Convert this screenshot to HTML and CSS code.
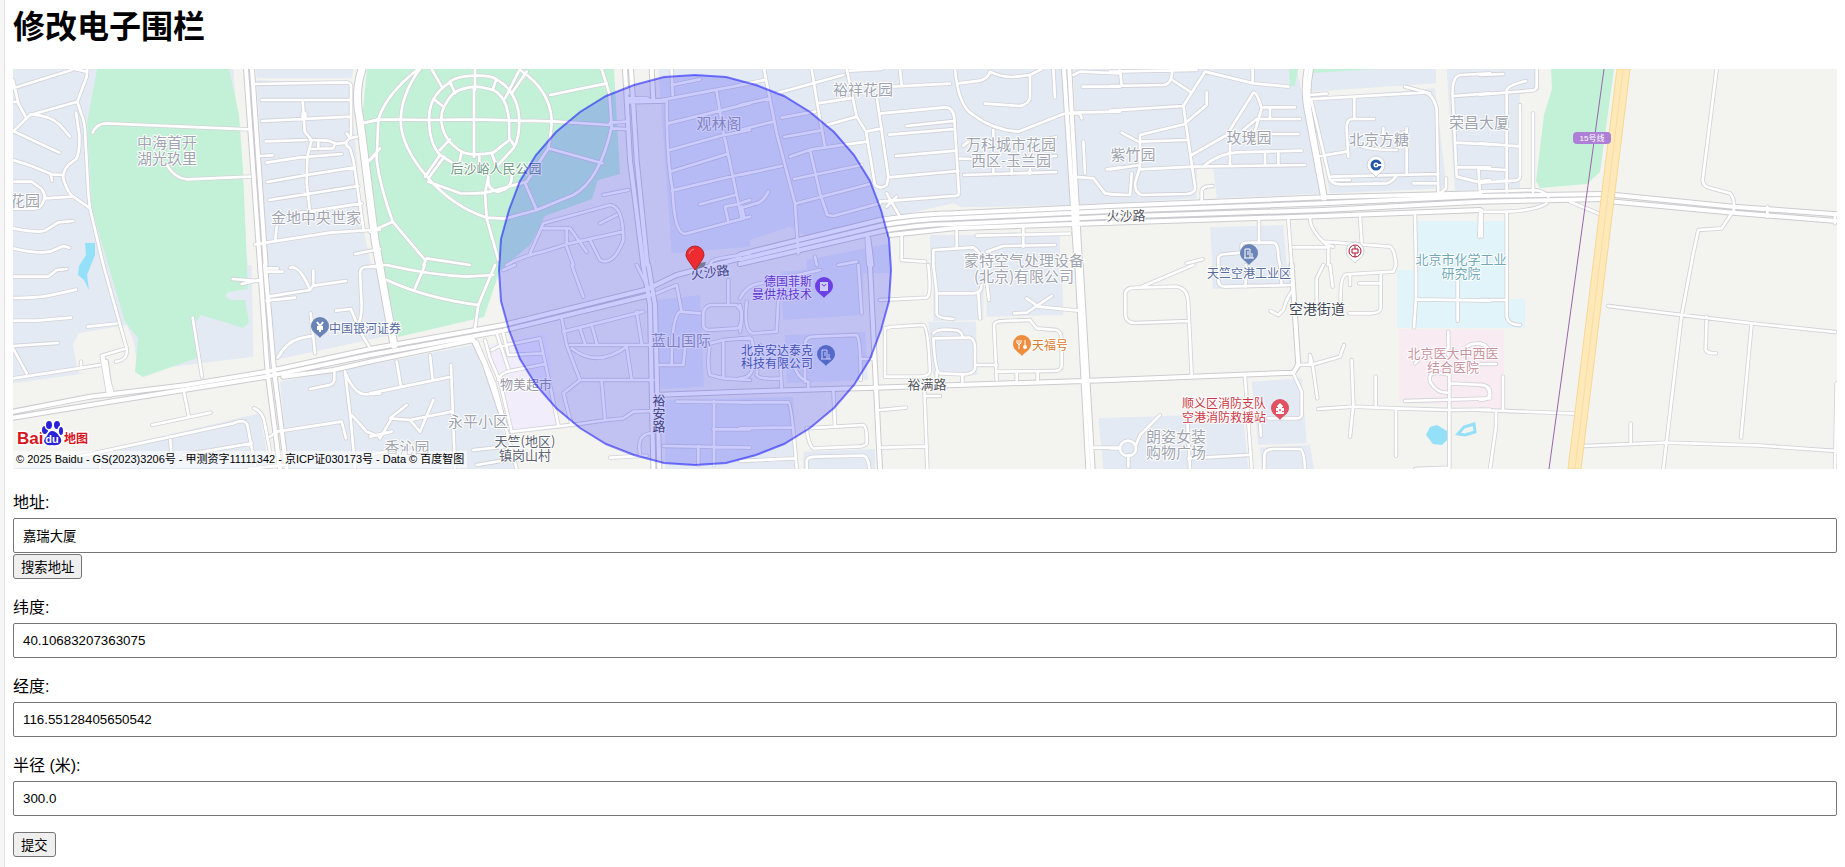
FILE: index.html
```html
<!DOCTYPE html>
<html lang="zh-CN">
<head>
<meta charset="utf-8">
<title>修改电子围栏</title>
<link rel="stylesheet" href="styles.css">
</head>
<body>
<div class="edge"></div>
<main class="content">
<h1 class="title">修改电子围栏</h1>
<div class="map">
<svg class="map-canvas" viewBox="13 69 1824 400" preserveAspectRatio="xMinYMid slice" role="img" aria-label="地图">
<defs>
<g id="minor">
<path transform="translate(0 60) scale(.33333)" d="M39,85L215,30M222,27L260,35M262,27L260,50 232,125 245,165Q255,185 256,230L265,400 270,445 310,615M232,125L90,165 39,215M39,60L55,130 78,172M39,126H52M90,163Q150,165 180,195L210,230M39,213L178,278M228,158L238,225Q240,280 228,297L205,315Q180,345 195,370Q205,400 220,410L270,445M39,300L95,318 155,343 188,345M152,343L156,362M39,365H95L125,387Q143,410 125,435 115,448 90,446H39M135,415L220,410M39,505Q120,520 135,512L175,487 220,483M39,565Q110,582 150,575L190,558 208,563M278,218Q290,190 318,190L745,208M500,315Q525,355 560,358L750,350M762,72L1040,67Q1053,69 1053,80V225M785,120H1052M787,183L1052,170M797,244L920,240M908,120L914,215 935,240 922,290 920,370 930,455M908,160H916V177H908ZM930,240L985,242 1005,250 1000,265 930,267M955,242V267M1005,252L1040,248M1040,220L1050,235 1070,230M1050,235Q1025,250 1050,265L1060,300 1090,505M778,288L818,286M800,308L900,292 1025,282M802,366L920,345 1065,322M808,420L1075,378M890,460L1085,430M830,500L826,540M765,553L990,518 1140,508M1065,582L1140,567M1085,190L1140,178M1100,310L1140,265"/>
<path transform="translate(0 265) scale(.33333)" d="M39,35H145L170,15 200,12M39,99Q110,99 150,91L228,74M39,167H110L213,158M263,185L350,176M39,243L173,234M39,250L80,325M39,340L230,311 300,300M243,290V310M310,0L380,250Q385,285 348,290M380,250L305,272 325,390M310,275L338,388M578,158L606,335M698,42L775,48M725,57L775,45M550,372L566,452M457,480L632,443M210,580L700,475Q735,460 742,480L765,600M510,515L517,600M550,570L755,535M300,590V612M762,430Q790,440 795,480L810,560M805,95L930,75Q900,0 870,8M940,17V60L930,75M940,62L1038,48M800,107L885,98M800,10L833,10M800,20L848,20M1140,6H1100Q1080,6 1080,25L1085,120Q1085,160 1075,175M1008,137L1053,132 1080,200 1108,245M932,145L940,215 945,265M833,278Q860,230 900,220L940,212M1003,320V345Q1000,360 980,362L930,372M1035,320Q1060,385 1095,388L1140,385M1035,320L1053,470 1065,612M1055,450L1100,500 1140,515M810,515L830,500 1025,470 1038,520M745,612L850,600"/>
<path transform="translate(370 60) scale(.33333)" d="M0,185L25,178 180,180 310,178 450,182 550,184 720,195M145,27Q50,100 25,178L20,300Q30,380 68,485L165,600M150,27Q95,100 92,180 92,260 175,355 250,440 350,473L405,476 500,450 610,405Q690,360 725,200L718,100 695,27M315,27V90M312,80V290M450,30Q540,90 545,180 545,210 535,265L470,365 360,395Q330,402 270,400L175,365M315,47Q250,50 238,68 175,110 177,180 178,250 210,285 L265,320M315,47Q360,45 378,57 445,95 448,180 448,240 430,265L380,320M315,80Q270,85 250,100 212,140 214,180 217,240 275,275 310,290 370,278L418,240 417,180Q410,110 370,90 330,80 315,80M185,27L218,85M240,65L255,100M450,27L405,115M470,35L425,100M378,60L368,90M195,120L220,140M210,270L240,238M418,235L432,255M275,275L265,320M365,280L380,320M328,290V320M223,290L175,355M210,285L165,350M355,350Q350,390 385,395 430,385 425,340M355,350L345,400 350,475 385,600M540,105L710,70M535,265L697,310M465,370L500,450M0,300L20,280M0,515L68,485M160,615L170,595 300,615M720,195V188L770,185M725,205L770,207M775,100Q760,30 765,27M905,27L908,105M770,115L830,115 850,125 1140,70M905,75L990,58M1040,95L1060,215 1115,475M890,125Q890,300 908,390 912,520 945,522L1140,470M895,190L1140,130M900,270L1050,228 1140,210M900,335L1070,283M905,392L1090,348 1140,338M990,433L1095,405M1065,440L1100,433 1140,420M1065,440L1075,485M700,405L775,390M480,580L520,490 720,435Q760,440 760,540 730,620 690,600L660,540M520,505H600L650,575M590,510L590,560 610,615M690,490L740,465M410,615Q450,590 520,575L600,550 760,515M1020,615Q1020,600 1050,595L1140,580"/>
<path transform="translate(370 265) scale(.33333)" d="M0,5L45,0M50,0Q180,30 290,35L370,30M165,0L135,70M50,45Q170,100 325,120L375,0M325,120L315,190M0,385L245,335M80,290L93,365M180,270L188,345M243,300L255,612M0,515L65,500M60,460L110,420M60,460L120,465 245,440M190,405L150,500 120,465M65,460L30,520M0,570L70,555M320,230L375,360 400,460 440,612M345,225L360,280 390,350 425,500 600,480M365,255L385,245 510,220 565,480M380,205L415,310 M400,205L415,270 515,265M385,345Q390,325 420,318L520,298M310,555L405,545M320,600L410,585 470,570M400,15L435,0M605,0L640,95M575,160L590,240 630,345 580,385 605,480 710,465 760,460 790,440 845,438M580,200L820,140M630,190L645,235M665,180L680,235M600,240H840M605,250Q680,310 770,245L785,345M800,140L815,235M630,345L850,345M695,350L705,465M800,0L830,60M860,85L920,60 935,140M990,145L930,140Q905,150 905,300M865,300H940L945,250M1000,140V180Q1000,195 1020,195L1100,190Q1115,190 1115,140L1100,120H1020Q1000,125 1000,150M1075,45V120M1020,235L1060,225 1140,218M1060,225V340M1020,235Q1010,300 1020,330L1060,340 1140,345M920,410L1140,412M1032,410V600M880,543L1140,548M1030,493H1140M985,543V600M720,578L830,572M810,565Q800,510 840,505"/>
<path transform="translate(740 60) scale(.33333)" d="M0,75L75,60M72,27L110,220 165,430 175,580M0,135L90,115M0,210L100,185M0,345L125,318M0,445L50,430Q70,425 85,395M5,440L12,470M110,100L310,45M215,27L235,150 255,260M125,173L225,155M232,130L330,115M133,231L240,212M260,195L350,170M320,27L350,170 378,215 405,375Q420,390 440,375L445,350 410,110M330,32L425,27M480,27L485,75M455,80L630,71M425,160L615,142Q640,142 643,175L657,400Q655,410 640,408L420,425M500,198L640,183M448,224L645,207M468,288L650,272M445,352L655,333M378,215L425,205M150,290L215,268 380,245M162,357L365,315M210,270L240,400 262,465 280,468 420,430M170,430L390,372M440,400L480,470M470,410L440,440M645,27Q655,140 700,165 760,210 835,215L900,190 970,162 1000,158 1140,155M655,70L720,62Q745,55 750,35 790,55 830,50L870,45 905,27M870,45V110Q870,130 840,138L735,131M940,27L945,112M760,210V240M670,257L685,245M672,345L948,336M660,296L700,297M760,320V342M815,320V342M870,320V342M925,290L948,288M930,235L948,232M1000,45L1020,35 1140,40M1028,80H1140M1000,160H1020L1025,175M1030,245L1035,340M1000,350L1060,355 1095,400 1140,405M1100,328L1140,322M485,530V600L555,605M580,615V570L700,562Q725,580 725,600M710,527L990,521M850,500V560M650,510V560M740,575L790,558 945,555M380,535L385,615M225,590L230,615M295,615L350,605"/>
<path transform="translate(740 265) scale(.33333)" d="M0,100Q20,60 60,55L240,15M20,110Q10,200 40,205L110,200 115,100M0,200Q10,150 0,120M355,0L365,145M565,0Q575,90 560,98L420,105M435,200Q430,185 470,185L550,180Q565,185 570,320 565,335 540,335L435,335M435,190V335M580,0Q590,80 590,85L590,145Q590,160 640,162M590,85H700Q725,85 725,60M715,85L720,160M740,50L747,105M860,100L895,125 1015,137M935,93L860,143 822,145M580,205Q590,190 640,195 665,195 668,215M580,220L690,218Q705,222 705,250V310Q700,328 670,328L600,325Q585,320 580,220M590,320V340M667,330V350M712,300H770M770,345L762,180Q765,168 790,168L870,165 890,190 950,195Q965,200 965,230V300Q965,318 940,318L775,320M830,320V345M893,320V345M553,370L562,612M553,393H600M420,435L498,428M425,548L562,544M280,375L285,480M200,490L370,480Q382,485 380,535 375,545 350,545L220,550Q205,540 200,490M200,612V585Q205,575 230,575L370,572Q385,575 388,612M195,350V240Q195,215 220,215L350,210Q362,220 362,345M360,282H400M0,220L35,222Q40,235 40,300 35,340 0,340M120,270L125,370M60,240L50,330Q60,345 120,340M160,290Q170,340 205,350V370M0,412L145,412Q155,415 170,612M0,490L160,487M0,588L165,580M1060,548H1140"/>
<path transform="translate(1110 60) scale(.33333)" d="M30,30L35,75M0,35L260,30M0,78L160,75Q185,75 187,30M187,60L240,95M285,35L220,137 255,380Q258,400 230,402L95,405Q75,400 75,370L90,320 90,225 225,192M285,35L430,70 535,80M428,27V68M0,152L220,138M225,190L290,135V97M35,218L85,245 230,240M0,328L90,315M90,328L250,320 585,315M0,403L60,405 65,340M245,285L350,225 430,98Q440,95 455,145L430,230M555,142H460M570,177H440L400,210M480,145V175M565,222H450M285,315Q330,280 380,277L575,272M360,250V315M465,275V315M505,275V315M275,425V395Q275,378 308,378M600,105L650,101M590,118L940,98Q965,95 980,145L985,400M885,80L960,100M603,118L660,360Q670,373 690,373L830,370Q850,365 860,345M733,115V177M792,177H725Q708,180 710,210L715,290M620,290L710,275M665,350L985,342M665,360H720M890,205V345M820,205V235M845,230L890,215M740,250Q760,270 860,270M910,370H980M1008,355V385L990,400M1140,40L1050,45Q1025,50 1028,110L1040,350 1100,365 1140,360M1030,108L1140,100M1035,248L1140,253M1040,322L1140,322M1105,325L1110,395M447,480V550M395,575V555Q395,548 420,548H490Q505,550 505,590L510,615M325,615V595Q325,582 350,582L395,578M230,610L278,598M535,480L545,615M600,475Q600,510 650,555L670,560M550,562H650M640,545L840,560Q855,570 858,615M750,470L755,545M655,560V615M915,465L918,615M1110,460L1108,530"/>
<path transform="translate(1110 265) scale(.33333)" d="M250,0L95,65M45,90Q45,68 75,68L200,65Q235,70 235,120L245,330M235,168L75,174Q48,174 46,150V90M325,0V45Q325,65 345,65L545,60M407,0V65M510,0L515,60M545,80Q530,100 520,135L505,150 482,138M560,300L610,298 690,275 702,240M600,300V270L608,300 622,400M725,285L730,420 720,515M625,432L730,425 860,430 1018,435 1140,434M797,335V420M858,430V572M692,110Q690,30 710,28L850,20 858,0M720,60V30M747,55H812M812,30V130Q810,145 780,145H718M620,110V40L640,0M660,0L668,65M918,0V100L912,187M918,103L1140,107M1043,35V168M1015,200V270M1018,320V612M1018,330Q950,310 960,350 980,385 1010,383M1018,355L1120,360Q1140,365 1140,400L885,408M915,295L930,280M1070,245Q1090,230 1125,240M405,335L425,612M550,325L575,380V450Q575,460 555,460H475M450,475L453,512M0,550H30M55,605V570M78,540L90,510 150,450M30,550A23,22 0 1 0 78,550A23,22 0 1 0 30,550M235,580L415,570M232,470L240,612M463,612V570Q465,552 490,552H570Q582,555 585,612M915,612L1018,608"/>
<path transform="translate(1480 60) scale(.33333)" d="M0,45L70,42M80,395V90Q85,75 138,63M170,27V80Q168,92 150,92L0,104M120,135V350Q118,362 100,362L0,368M159,160V395M0,250L120,259M0,325L80,330M80,455V770Q85,795 120,795M0,720H80M710,27L668,360Q668,378 690,384L750,400Q765,415 762,450L725,505 655,510 640,580 605,765 550,1227M862,440V470M1065,460V490M385,738L605,765 815,790 1065,816M680,770L677,870Q680,880 708,880M815,790L783,1133M312,1158L555,1148 830,1156 1070,1173M1065,1227L1070,970M452,1090V1150M0,1050L290,1061M69,950V1050M48,1055V1100L30,1227M0,850L20,860M0,912H48M0,975Q35,975 30,1005 20,1020 0,1020M270,425L362,463M0,395L160,390Q190,390 205,410M0,455Q150,460 200,430M5,450V530"/>
</g>
<g id="major">
<path transform="translate(0 60) scale(.33333)" d="M738,27L780,615M756,27L797,615"/>
<path transform="translate(0 265) scale(.33333)" d="M780,0L803,325 840,612M795,0L823,325 860,612M39,440L270,395 560,360 800,320 1110,252M39,458L330,410 800,335 1110,270M850,335L1000,315 1110,290M318,290L330,390"/>
<path transform="translate(370 60) scale(.33333)" d="M765,27L780,300 820,615M783,27L800,300 832,615M845,27L850,120M770,125L885,122"/>
<path transform="translate(370 265) scale(.33333)" d="M820,0L840,120 850,612M835,0L855,120 868,612M0,252L400,180 830,73 920,30 1110,-20M0,270L400,197 840,90M0,290L310,225M310,225L345,300 405,480M850,390L1110,380"/>
<path transform="translate(740 60) scale(.33333)" d="M0,583L420,480Q560,460 640,460L1110,438M0,598L430,495Q560,475 640,475L1110,453M0,612L440,510Q560,492 640,492L1110,470M450,525L640,505 1110,488M972,27L1010,615M988,27L1020,615M385,535L395,615"/>
<path transform="translate(740 265) scale(.33333)" d="M390,0L420,612M1012,0L1045,612M1022,0L1058,612M0,380L400,368 1030,348 1110,345"/>
<path transform="translate(1110 60) scale(.33333)" d="M0,438L640,412 1110,400M0,453L640,430 1110,408M0,470L640,450 1110,425M0,488L640,468 1110,450M590,27Q578,90 590,150L640,415M603,27Q590,90 598,150L645,415"/>
<path transform="translate(1110 265) scale(.33333)" d="M0,345L550,323 565,300 545,0"/>
<path transform="translate(1480 60) scale(.33333)" d="M0,408L370,402M0,425L370,417M405,405L760,440 1070,463M405,425L760,458 1070,483"/>
</g>
<path id="avenue" d="M362,69Q354,94 360,120L375,240 394,345"/>
<path id="drop" d="M0,10C-3,6 -9,4 -9,-2A9,9 0 0 1 9,-2C9,4 3,6 0,10Z"/>
</defs>

<rect class="land" x="13" y="69" width="2400" height="400"/>

<g class="block">
<path transform="translate(0 60) scale(.33333)" d="M39,27H700L745,640H39ZM768,27H1060L1055,55H770ZM770,60L1050,75 1090,510 1120,640H805Z"/>
<path transform="translate(0 265) scale(.33333)" d="M39,0H755L760,275 480,310 235,328 39,355ZM805,0H1170L1220,200 825,285ZM840,350L1420,240 1475,380 1545,612H865ZM39,612L330,550 780,445 808,612Z"/>
<path transform="translate(370 60) scale(.33333)" d="M865,27H1140V560L905,580Z"/>
<path transform="translate(370 265) scale(.33333)" d="M860,105L990,90 1002,365 873,372ZM885,405L1140,400V612H885Z"/>
<path transform="translate(740 60) scale(.33333)" d="M0,27H968L995,435 665,442 640,430 200,530 150,500 0,550ZM1000,27H1140V425L1015,435ZM570,525H960V615H570ZM200,600L450,550V640H200Z"/>
<path transform="translate(740 265) scale(.33333)" d="M120,20L370,0V150L130,165ZM135,210L375,200 385,345 140,355ZM0,400L160,395 170,612H0ZM580,0H730V165L580,168ZM740,0H965L970,150 740,155ZM565,170H708L712,330H580ZM190,560L405,552V612H190ZM1075,460L1200,455V612H1090Z"/>
<path transform="translate(1110 60) scale(.33333)" d="M0,27H560L640,400 320,415 310,325H260V415L0,430ZM600,27H978V70L600,95ZM605,115L975,85 1010,385 660,400ZM1010,27H1280L1290,90 1230,95V385L1035,392ZM300,502L520,495 530,620H308Z"/>
<path transform="translate(1110 265) scale(.33333)" d="M305,0H550V65L308,72ZM0,460L230,450 400,455 415,612H0ZM425,350L575,340 590,535 445,540ZM450,548L600,540 612,612H455Z"/>
</g>
<path class="land" transform="translate(0 265) scale(.33333)" d="M235,205L380,180 400,225 418,335 235,325 218,240Z"/>
<g class="park">
<path d="M97,69H229L239,115 243,170 247,267 248,289 228,292 225,296 230,300 245,300 249,322 243,328 201,315 195,322 197,358 143,377 135,372 138,338 125,322 92,210 87,123Z"/>
<path d="M367,69H614L620,174 598,180 592,199 545,216 530,245 500,270 484,317 398,337 380,250 362,120Z"/>
<path d="M1289,69H1298L1295,86H1290ZM1313,69H1375L1313,73Z"/>
<path d="M1551,69H1614L1600,172 1587,184 1540,188 1536,181 1544,115 1552,89Z"/>
</g>
<path class="school" d="M1417,221H1506V299H1525V328H1397V270H1417Z"/>
<path class="hospital" d="M1399,329L1504,330V409L1399,402Z"/>
<path class="mall" d="M490,345L545,333 560,425 510,434Z"/>
<g class="water">
<path d="M85,243H95V255L87,275 89,290 84,280 78,275 79,266 86,255Z"/>
<path d="M1426,435L1430,427 1437,425 1447,431 1447,440 1442,445 1433,444Z"/>
<path class="pond" d="M1458,434L1464,427 1474,424 1475,432 1465,435Z"/>
</g>

<use href="#minor" class="road minor-case"/>
<use href="#major" class="road major-case"/>
<use href="#avenue" class="road avenue-case"/>
<use href="#minor" class="road minor-fill"/>
<use href="#major" class="road major-fill"/>
<use href="#avenue" class="road avenue-fill"/>
<path class="highway" d="M1617,69H1630L1581,469H1568Z"/>
<path class="highway-line" d="M1623,69L1575,469"/>
<path class="metro" d="M1604,69L1549,469"/>
<rect class="metro-tag" x="1573" y="132" width="38" height="12" rx="4"/>
<text class="t8" x="1592" y="141">15号线</text>

<g class="label gray t15">
<text x="167" y="148">中海首开</text><text x="167" y="164">湖光玖里</text>
<text x="25" y="206">花园</text><text x="316" y="223">金地中央世家</text>
<text x="719" y="129">观林阁</text><text x="863" y="95">裕祥花园</text>
<text x="1011" y="150">万科城市花园</text><text x="1011" y="166">西区-玉兰园</text>
<text x="1133" y="160">紫竹园</text><text x="1249" y="143">玫瑰园</text>
<text x="1379" y="145">北京方糖</text><text x="1479" y="128">荣昌大厦</text>
<text x="1024" y="266">蒙特空气处理设备</text><text x="1024" y="282">(北京)有限公司</text>
<text x="681" y="346">蓝山国际</text><text x="478" y="427">永平小区</text>
<text x="407" y="453">香沁园</text><text x="1176" y="442">朗姿女装</text><text x="1176" y="458">购物广场</text>
</g>
<g class="label t13">
<text class="green-text" x="496" y="173">后沙峪人民公园</text>
<text class="market" x="526" y="389">物美超市</text>
<text class="street" x="1126" y="220">火沙路</text><text class="street" x="927" y="389">裕满路</text>
<text class="street" x="659" y="405">裕</text><text class="street" x="659" y="418">安</text><text class="street" x="659" y="431">路</text>
<text class="street" x="710" y="277" transform="rotate(-7 710 272)">火沙路</text>
<text class="teal" x="1461" y="264">北京市化学工业</text><text class="teal" x="1461" y="278">研究院</text>
<text class="rose" x="1453" y="358">北京医大中西医</text><text class="rose" x="1453" y="372">结合医院</text>
<text class="village" x="525" y="446">天竺(地区)</text><text class="village" x="525" y="460">镇岗山村</text>
</g>
<text class="label town t14" x="1317" y="314">空港街道</text>
<g class="label t12">
<text class="blue" x="365" y="333">中国银河证券</text><text class="blue" x="1249" y="278">天竺空港工业区</text>
<text class="violet" x="788" y="286">德国菲斯</text><text class="violet" x="782" y="299">曼供热技术</text>
<text class="blue" x="777" y="355">北京安达泰克</text><text class="blue" x="777" y="368">科技有限公司</text>
<text class="orange" x="1050" y="350">天福号</text>
<text class="red" x="1224" y="408">顺义区消防支队</text><text class="red" x="1224" y="422">空港消防救援站</text>
</g>

<g transform="translate(320 328)"><use href="#drop" class="pin-blue"/><path class="glyph bold" d="M-3,-6L0,-2 3,-6M0,-2V4M-3,-1H3M-3,1H3"/></g>
<g transform="translate(1249 255)"><use href="#drop" class="pin-blue"/><path class="glyph" d="M-4,3V-6H1V3M-2,-3H0M-2,-1H0M3,-2V3M-5,3H5"/></g>
<g transform="translate(826 356)"><use href="#drop" class="pin-blue"/><path class="glyph" d="M-4,3V-6H1V3M-2,-3H0M-2,-1H0M3,-2V3M-5,3H5"/></g>
<g transform="translate(824 288)"><use href="#drop" class="pin-violet"/><path class="glyph-fill" d="M-4,-6H4V3H-4Z"/><path class="bag" d="M-2,-4Q0,0 2,-4"/></g>
<g transform="translate(1022 346)"><use href="#drop" class="pin-orange"/><path class="glyph" d="M-3,-6V3M-5,-6V-3L-3,-1 -1,-3V-6M3,-6V-1"/><circle class="glyph-fill" cx="3" cy="1" r="2"/></g>
<g transform="translate(1280 410)"><use href="#drop" class="pin-red"/><path class="glyph-fill" d="M-2,-5L0,-7 2,-5 3,-4V-3H-3V-4ZM-2,-3H2V2H4V4H-4V2H-2ZM-4,-2H4V1H-4Z"/><circle class="dot-red" r="1"/></g>
<g transform="translate(1376 167)"><use href="#drop" class="pin-white"/><circle class="c-blue" cy="-2" r="4"/><path class="c-notch" d="M2,-2H6"/><circle class="dot-blue" cy="-2" r="1"/></g>
<g transform="translate(1355 253)"><use href="#drop" class="pin-white"/><circle class="bank" cy="-2" r="6"/><path class="bank" d="M-3,-4H3V0H-3ZM0,-7V-4M0,0V4"/></g>

<path class="fence" transform="translate(695 270)" d="M0,-195L31,-193 61,-185 89,-174 115,-158 139,-138 159,-115 175,-89 186,-60 194,-31 196,0 194,31 186,60 175,89 159,115 139,138 115,158 89,174 61,185 31,193 0,195 -31,193 -61,185 -89,174 -115,158 -139,138 -159,115 -175,89 -186,60 -194,31 -196,0 -194,-31 -186,-60 -175,-89 -159,-115 -139,-138 -115,-158 -89,-174 -61,-185 -31,-193Z"/>
<path class="shadow" d="M695,270L699,263 706,262 704,267Z"/>
<path class="marker" d="M695,270L688,260Q686,257 686,255A9,9 0 0 1 704,255Q704,257 702,260Z"/>
<path class="shine" d="M689,254Q690,250 694,249"/>

<g class="logo">
<text class="logo-latin" x="17" y="444">Bai</text><text class="logo-cjk" x="64" y="443">地图</text>
<g class="paw"><ellipse cx="45" cy="430" rx="3" ry="4"/><ellipse cx="49" cy="425" rx="3" ry="4"/><ellipse cx="57" cy="425" rx="3" ry="4"/><ellipse cx="61" cy="431" rx="2" ry="4"/><path d="M52,431Q56,431 59,436 62,439 61,442 59,446 52,445 45,446 44,441 44,438 47,436 49,431 52,431Z"/></g>
<text class="logo-du" x="52" y="443">du</text>
</g>
</svg>
<div class="copyright">© 2025 Baidu - GS(2023)3206号 - 甲测资字11111342 - 京ICP证030173号 - Data © 百度智图</div>
</div>
<form class="form">
<div class="field"><label for="address">地址:</label><input id="address" type="text" value="嘉瑞大厦"><button class="search" type="button">搜索地址</button></div>
<div class="field"><label for="lat">纬度:</label><input id="lat" type="text" value="40.10683207363075"></div>
<div class="field"><label for="lng">经度:</label><input id="lng" type="text" value="116.55128405650542"></div>
<div class="field"><label for="radius">半径 (米):</label><input id="radius" type="text" value="300.0"></div>
<button type="submit">提交</button>
</form>
</main>
</body>
</html>
```
FILE: styles.css
```css
* { box-sizing: border-box; }
body {
  margin: 0;
  display: flex;
  min-height: 100vh;
  background: #fff;
  color: #000;
  font-family: "Liberation Sans", "Noto Sans CJK SC", sans-serif;
}
.edge { flex: 0 0 5px; background: #f5f5f5; border-right: 1px solid #e4e4e4; }
.content { flex: 1; min-width: 0; padding: 6px 8px 8px; }
.title { margin: 0 0 20px; font-size: 32px; line-height: 43px; }
.map { position: relative; height: 400px; overflow: hidden; background: #f3f3ef; }
.map-canvas { display: block; width: 100%; height: 100%; }
.copyright {
  position: absolute;
  left: 0;
  bottom: 1px;
  padding: 0 3px;
  background: rgba(255, 255, 255, .5);
  font-size: 11px;
  line-height: 17px;
  white-space: nowrap;
}

.land { fill: #f3f3ef; }
.block { fill: #e4eaf3; }
.park { fill: #c3f1d7; }
.school { fill: #e0f4fa; }
.hospital { fill: #f8ebf1; }
.mall { fill: #f1edfa; }
.water { fill: #94e0f8; }
.pond { fill: #f3f3ef; stroke: #94e0f8; stroke-width: 3; }
.road { fill: none; stroke-linejoin: round; stroke-linecap: round; }
.minor-case { stroke: #d2d3d8; stroke-width: 13; }
.minor-fill { stroke: #fff; stroke-width: 8; }
.major-case { stroke: #ccccd0; stroke-width: 18; }
.major-fill { stroke: #fff; stroke-width: 12; }
.avenue-case { stroke: #ccccd0; stroke-width: 9; }
.avenue-fill { stroke: #fff; stroke-width: 7; }
.highway { fill: #ffe9b8; stroke: #f8d795; stroke-width: 1; }
.highway-line { stroke: #f8dca2; }
.metro { stroke: #9667a8; }
.metro-tag { fill: #ad7fd6; }
.t8 { font-size: 8px; fill: #fff; text-anchor: middle; }
.t12 { font-size: 12px; }
.t13 { font-size: 13px; }
.t14 { font-size: 14px; }
.t15 { font-size: 15px; }
.label {
  font-family: "Noto Sans CJK SC", sans-serif;
  text-anchor: middle;
  stroke: #fff;
  stroke-width: 2px;
  stroke-linejoin: round;
  paint-order: stroke;
}
.gray { fill: #a0a4b0; }
.green-text { fill: #719b86; }
.market { fill: #9896a8; }
.street { fill: #55565e; }
.teal { fill: #6fa9b8; }
.rose { fill: #c9939f; }
.village { fill: #5c6272; }
.town { fill: #3f4656; }
.blue { fill: #5469a0; }
.violet { fill: #7a43c4; }
.orange { fill: #dc7b2e; }
.red { fill: #c93645; }
.pin-blue { fill: #6b84b8; }
.pin-violet { fill: #8950de; }
.pin-orange { fill: #ee8d3e; }
.pin-red { fill: #e15362; }
.pin-white { fill: #fff; stroke: #d0d0da; }
.glyph { fill: none; stroke: #fff; stroke-width: 1; }
.bold { stroke-width: 2; }
.glyph-fill { fill: #fff; }
.bag { fill: none; stroke: #8950de; }
.dot-red { fill: #e15362; }
.c-blue { fill: none; stroke: #2458a5; stroke-width: 3; }
.c-notch { stroke: #fff; stroke-width: 2; }
.dot-blue { fill: #2458a5; }
.bank { fill: none; stroke: #a8102f; stroke-width: 1; }
.fence { fill: rgba(0, 0, 255, .2); stroke: rgba(0, 0, 255, .5); stroke-width: 2; }
.shadow { fill: #777798; }
.marker { fill: #ee2b30; stroke: #b3242a; stroke-width: 1; }
.shine { fill: none; stroke: #f98a8c; stroke-width: 1; }
.logo text, .paw { stroke: #fff; stroke-width: 3px; stroke-linejoin: round; paint-order: stroke; }
.logo-latin { font-size: 17px; font-weight: bold; fill: #d8151c; }
.logo-cjk { font-family: "Noto Sans CJK SC", sans-serif; font-size: 12px; font-weight: bold; fill: #d8151c; }
.paw { fill: #2822d8; }
.logo .logo-du { font-size: 11px; font-weight: bold; fill: #fff; stroke: none; text-anchor: middle; }

.form { margin-top: 21px; display: flex; flex-direction: column; align-items: flex-start; gap: 16px; }
.field { display: flex; flex-direction: column; align-items: flex-start; width: 100%; }
.field label { margin-bottom: 3px; font-size: 16px; line-height: 25px; }
input {
  width: 100%;
  height: 35px;
  padding: 0 9px;
  border: 1px solid #767676;
  border-radius: 2px;
  background: #fff;
  color: #000;
  font-family: inherit;
}
button {
  height: 25px;
  padding: 0 7px;
  border: 1px solid #767676;
  border-radius: 3px;
  background: #efefef;
  color: #000;
  font-family: inherit;
}
.search { margin-top: 1px; }
```
